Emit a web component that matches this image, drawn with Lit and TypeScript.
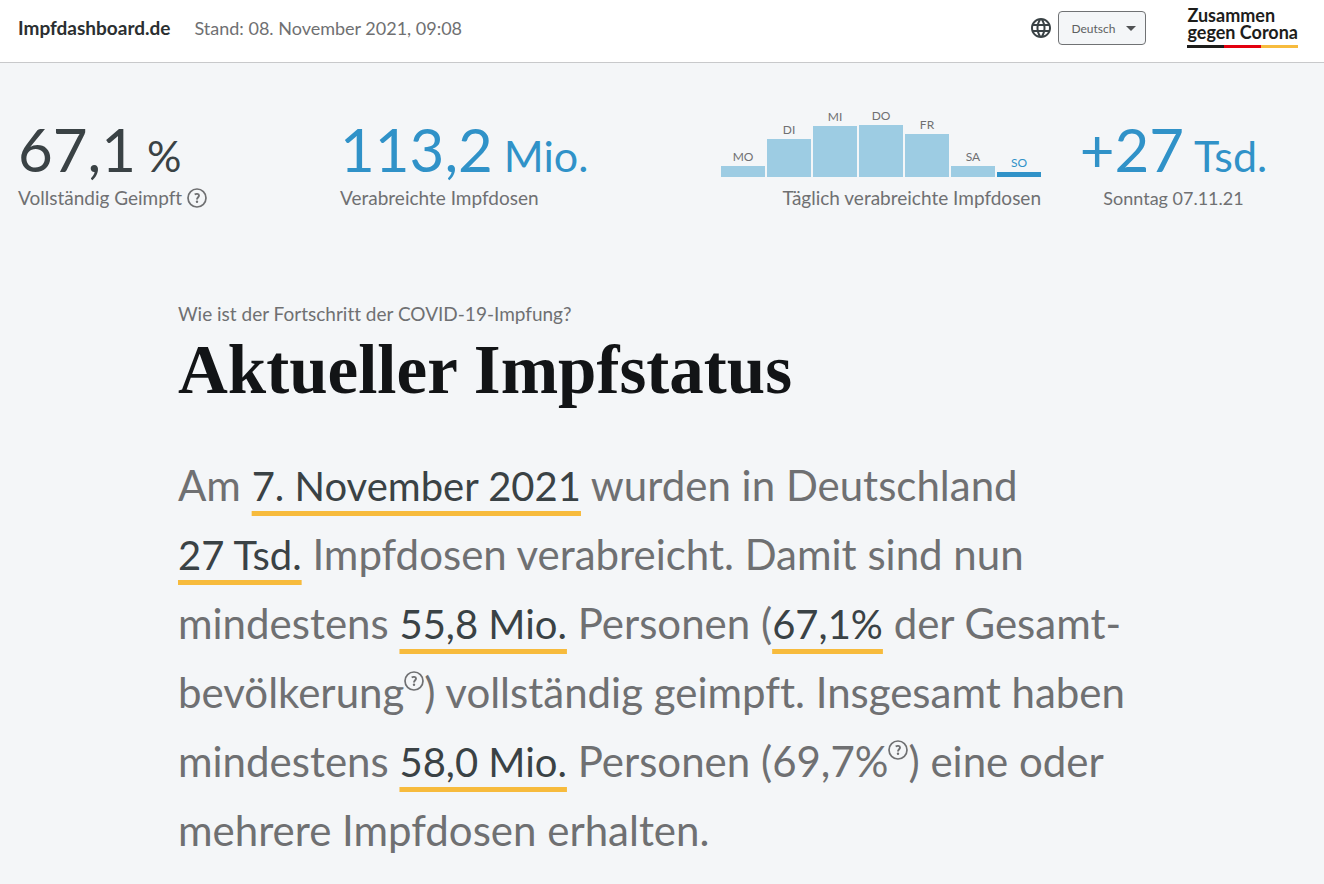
import { LitElement, html, css } from "lit";
import { customElement, property } from "lit/decorators.js";

const SANS = css`Lato, "Noto Sans", "Open Sans", sans-serif`;

@customElement("help-button")
class HelpButton extends LitElement {
  @property() label = "Hinweis";

  static styles = css`
    :host { display: inline-flex; }
    .help {
      display: block;
      width: 20px;
      height: 20px;
      padding: 0;
      border: 0;
      background: none;
      color: inherit;
      cursor: pointer;
    }
    .icon { display: block; width: 20px; height: 20px; }
  `;

  render() {
    return html`
      <button class="help" type="button" aria-label=${this.label}>
        <svg class="icon" viewBox="0 0 20 20" fill="none" stroke="currentColor" aria-hidden="true">
          <circle cx="10" cy="10" r="9" stroke-width="1.7"></circle>
          <path d="M7.7 6.5C8.8 5.7 12 5.4 12 7.6C12 9.2 10 9.3 10 11.5" stroke-width="1.9"></path>
          <circle cx="10" cy="13.8" r="1.2" fill="currentColor" stroke="none"></circle>
        </svg>
      </button>
    `;
  }
}

@customElement("page-header")
class PageHeader extends LitElement {
  static styles = css`
    :host {
      display: flex;
      align-items: center;
      height: 62px;
      padding: 0 26px 0 18px;
      background: #fff;
      border-bottom: 1px solid #c8c9cb;
      color: #6f7072;
    }
    .brand {
      margin-right: 24px;
      color: #2b2f31;
      font-weight: 700;
      text-decoration: none;
    }
    .date { font-size: 18px; }
    .brand, .date { padding-bottom: 6px; }
    .language {
      display: flex;
      align-items: center;
      gap: 7px;
      margin-left: auto;
      margin-right: 41px;
      padding-bottom: 6px;
    }
    .globe { display: block; width: 20px; height: 20px; color: #3a4245; }
    .picker { display: grid; align-items: center; }
    .select {
      grid-area: 1 / 1;
      appearance: none;
      width: 88px;
      height: 34px;
      padding: 0 12px;
      border: 1px solid #707274;
      border-radius: 4px;
      background: #f4f6f8;
      color: #5d5f61;
      font: 12px ${SANS};
    }
    .caret {
      grid-area: 1 / 1;
      justify-self: end;
      width: 10px;
      height: 5px;
      margin-right: 10px;
      pointer-events: none;
    }
    .campaign {
      padding-bottom: 7px;
      color: #1d1d1b;
      font-size: 18px;
      font-weight: 700;
      line-height: 17px;
      text-decoration: none;
    }
    .flag {
      display: block;
      height: 3px;
      margin-top: 4px;
      background: linear-gradient(90deg, #1d1d1b 33.3%, #e3000f 33.3% 66.6%, #f7bb3d 66.6%);
    }
  `;

  render() {
    return html`
      <a class="brand" href="#">Impfdashboard.de</a>
      <span class="date">Stand: 08. November 2021, 09:08</span>
      <div class="language">
        <svg class="globe" viewBox="2 2 20 20" fill="currentColor" aria-hidden="true">
          <path d="M11.99 2C6.47 2 2 6.48 2 12s4.47 10 9.99 10C17.52 22 22 17.52 22 12S17.52 2 11.99 2zm6.93 6h-2.95c-.32-1.25-.78-2.45-1.38-3.56 1.84.63 3.37 1.91 4.33 3.56zM12 4.04c.83 1.2 1.48 2.53 1.91 3.96h-3.82c.43-1.43 1.08-2.76 1.91-3.96zM4.26 14C4.1 13.36 4 12.69 4 12s.1-1.36.26-2h3.38c-.08.66-.14 1.32-.14 2s.06 1.34.14 2H4.26zm.82 2h2.95c.32 1.25.78 2.45 1.38 3.56-1.84-.63-3.37-1.9-4.33-3.56zm2.95-8H5.08c.96-1.66 2.49-2.93 4.33-3.56C8.81 5.55 8.35 6.75 8.03 8zM12 19.96c-.83-1.2-1.48-2.53-1.91-3.96h3.82c-.43 1.43-1.08 2.76-1.91 3.96zM14.34 14H9.66c-.09-.66-.16-1.32-.16-2s.07-1.35.16-2h4.68c.09.65.16 1.32.16 2s-.07 1.34-.16 2zm.25 5.56c.6-1.11 1.06-2.31 1.38-3.56h2.95c-.96 1.65-2.49 2.93-4.33 3.56zM16.36 14c.08-.66.14-1.32.14-2s-.06-1.34-.14-2h3.38c.16.64.26 1.31.26 2s-.1 1.36-.26 2h-3.38z"></path>
        </svg>
        <div class="picker">
          <select class="select" aria-label="Sprache">
            <option>Deutsch</option>
          </select>
          <svg class="caret" viewBox="0 0 10 5" aria-hidden="true"><path d="M0 0h10L5 5z" fill="#505254"></path></svg>
        </div>
      </div>
      <a class="campaign" href="#">Zusammen<br />gegen Corona<span class="flag"></span></a>
    `;
  }
}

const DAYS = [
  { name: "MO", height: 11 },
  { name: "DI", height: 38 },
  { name: "MI", height: 51 },
  { name: "DO", height: 52 },
  { name: "FR", height: 43 },
  { name: "SA", height: 11 },
  { name: "SO", height: 5, current: true },
];

@customElement("key-figures")
class KeyFigures extends LitElement {
  static styles = css`
    :host {
      display: grid;
      grid-template-columns: 322fr 381fr 320fr 265fr;
      align-items: end;
      padding: 44px 18px 0;
      color: #6f7072;
    }
    .value {
      margin: 0;
      color: #3a4245;
      font-size: 60px;
      line-height: 56px;
      white-space: nowrap;
    }
    .unit { font-size: 43px; }
    .blue { color: #3092c8; }
    .label {
      display: flex;
      align-items: center;
      gap: 5px;
      height: 28px;
      margin: 0;
      line-height: 28px;
      white-space: nowrap;
    }
    .end { justify-content: flex-end; }
    .center { justify-content: center; text-align: center; }
    .day-label { font-size: 18px; }
    .chart {
      display: flex;
      align-items: flex-end;
      gap: 2px;
      margin-bottom: 7px;
    }
    .day {
      flex: 1;
      color: #6f7072;
      font-size: 12px;
      line-height: 18px;
      text-align: center;
    }
    .bar { background: #9dcce3; }
    .current { color: #3092c8; }
    .current .bar { background: #3092c8; }
  `;

  render() {
    return html`
      <div>
        <p class="value">67,1<span class="unit"> %</span></p>
        <p class="label">Vollständig Geimpft <help-button label="Hinweis zu Vollständig Geimpft"></help-button></p>
      </div>
      <div>
        <p class="value blue">113,2<span class="unit"> Mio.</span></p>
        <p class="label">Verabreichte Impfdosen</p>
      </div>
      <div>
        <div class="chart">
          ${DAYS.map((d) => html`
            <div class="day ${d.current ? "current" : ""}">
              ${d.name}
              <div class="bar" style="height:${d.height}px"></div>
            </div>
          `)}
        </div>
        <p class="label end">Täglich verabreichte Impfdosen</p>
      </div>
      <div>
        <p class="value blue center">+27<span class="unit"> Tsd.</span></p>
        <p class="label center day-label">Sonntag 07.11.21</p>
      </div>
    `;
  }
}

@customElement("app-root")
class AppRoot extends LitElement {
  static styles = css`
    :host {
      display: block;
      min-height: 100vh;
      background: #f4f6f8;
      color: #6f7072;
      font: 19px/28px ${SANS};
      font-variant-ligatures: none;
    }
    .status {
      max-width: 968px;
      margin: 0 auto;
      padding: 88px 0 12px;
    }
    .kicker { margin: 0; }
    .title {
      margin: 0;
      color: #121416;
      font: 700 69px/84px "Liberation Serif", serif;
    }
    .summary {
      margin: 39px 0 0;
      font-size: 42px;
      line-height: 69px;
    }
    .mark {
      color: #3a4245;
      font-size: 40px;
      font-weight: 400;
      line-height: 60px;
      text-decoration: underline 5px #f7bb3d;
      text-decoration-skip-ink: none;
      text-underline-offset: 10px;
    }
    .note { vertical-align: 17px; line-height: 20px; }
  `;

  render() {
    return html`
      <page-header></page-header>
      <main>
        <key-figures></key-figures>
        <section class="status">
          <p class="kicker">Wie ist der Fortschritt der COVID-19-Impfung?</p>
          <h1 class="title">Aktueller Impfstatus</h1>
          <p class="summary">
            Am <strong class="mark">7. November 2021</strong> wurden in Deutschland<br />
            <strong class="mark">27 Tsd.</strong> Impfdosen verabreicht. Damit sind nun<br />
            mindestens <strong class="mark">55,8 Mio.</strong> Personen (<strong class="mark">67,1%</strong> der Gesamt-<br />
            bevölkerung<help-button class="note" label="Hinweis zur Gesamtbevölkerung"></help-button>) vollständig geimpft. Insgesamt haben<br />
            mindestens <strong class="mark">58,0 Mio.</strong> Personen (69,7%<help-button class="note" label="Hinweis zur Impfquote"></help-button>) eine oder<br />
            mehrere Impfdosen erhalten.
          </p>
        </section>
      </main>
    `;
  }
}
